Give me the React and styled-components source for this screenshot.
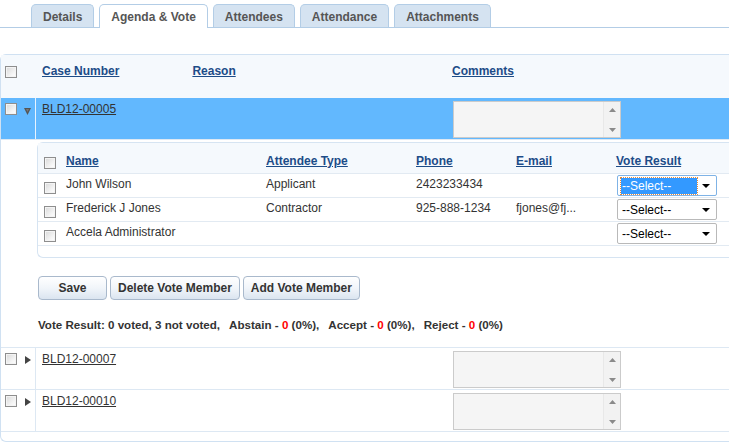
import React from 'react';
import styled, { createGlobalStyle } from 'styled-components';

const GlobalStyle = createGlobalStyle`
  body {
    margin: 0;
    font-family: "Liberation Sans", Arial, sans-serif;
    font-size: 12px;
    color: #333;
    background: #fff;
    overflow: hidden;
  }
`;

const Page = styled.div`
  width: 729px;
  height: 445px;
  overflow: hidden;
`;

const TabBar = styled.ul`
  display: flex;
  align-items: flex-end;
  gap: 5px;
  margin: 0;
  padding: 4px 0 0 31px;
  list-style: none;
  height: 23px;
  border-bottom: 1px solid #b3cde6;
`;

const Tab = styled.li`
  box-sizing: border-box;
  height: ${props => (props.active ? '24px' : '23px')};
  margin-bottom: ${props => (props.active ? '-1px' : '0')};
  padding: 1px 11px 0;
  line-height: 22px;
  font-weight: bold;
  color: #555;
  border: 1px solid #b3cde6;
  border-bottom: none;
  border-radius: 5px 5px 0 0;
  background: ${props => (props.active ? '#fff' : '#d5e3f1')};
`;

const Panel = styled.div`
  margin-top: 26px;
  width: 760px;
  border: 1px solid #d0e1f2;
  border-right: none;
  border-radius: 6px 0 0 6px;
  padding-bottom: 9px;
`;

const MainRow = styled.div`
  display: grid;
  grid-template-columns: 35px 409px 1fr;
  height: ${props => (props.header ? '42px' : '41px')};
  background: ${props => (props.selected ? '#62b8fe' : props.header ? '#f5f9fd' : '#fff')};
  border-bottom: 1px solid ${props => (props.header ? '#f5f9fd' : '#dde8f3')};
`;

const SelectCell = styled.div`
  display: flex;
  align-items: flex-start;
  gap: ${props => (props.selected ? 7 : 8)}px;
  padding: ${props => (props.header ? '11px' : '5px')} 0 0 4px;
  border-right: 1px solid ${props => (props.header ? 'transparent' : props.selected ? '#e7f3ff' : '#dde8f3')};
`;

const Cell = styled.div`
  padding: ${props => (props.header ? '9px' : '4px')} 0 0 ${props => props.pad || 6}px;
`;

const AreaCell = styled.div`
  padding-left: 8px;
`;

const HeadLink = styled.a`
  font-weight: bold;
  color: #1d4c88;
  text-decoration: underline;
  margin-left: ${props => props.offset || 0}px;
`;

const CaseLink = styled.a`
  color: #333;
  text-decoration: underline;
`;

const Box = styled.span`
  display: inline-block;
  box-sizing: border-box;
  width: 12px;
  height: 12px;
  flex: none;
  border: 1px solid #8e8e8e;
  background: linear-gradient(135deg, #d8d8d8, #f6f6f6 70%, #fff);
  box-shadow: inset 0 0 0 1px #f4f4f4;
`;

const Arrow = styled.svg`
  margin-top: ${props => props.top}px;
  flex: none;
`;

const FakeArea = styled.div`
  display: flex;
  width: 168px;
  height: 37px;
  margin-top: 3px;
  box-sizing: border-box;
  border: 1px solid #cbcbcb;
  background: #f5f5f5;
`;

const AreaText = styled.div`
  flex: 1;
`;

const ScrollBar = styled.div`
  width: 16px;
  display: flex;
  flex-direction: column;
  justify-content: space-between;
  align-items: center;
  padding: 6px 0 5px;
  border-left: 1px solid #e8e8e8;
  background: #f2f2f2;
`;

const Expanded = styled.div`
  padding: 2px 0 16px 36px;
  border-bottom: 1px solid #dde8f3;
`;

const Inner = styled.div`
  border: 1px solid #d6e4f2;
  border-right: none;
  border-radius: 6px 0 0 6px;
  padding-bottom: 11px;
`;

const VoteRow = styled.div`
  display: grid;
  grid-template-columns: 28px 200px 150px 100px 100px 1fr;
  height: ${props => (props.header ? '30px' : '23px')};
  background: ${props => (props.header ? '#f5f9fd' : '#fff')};
  border-bottom: 1px solid #e2eaf2;
`;

const VoteCell = styled.div`
  padding-top: ${props => (props.header ? '11px' : '3px')};
  white-space: nowrap;
`;

const BoxCell = styled.div`
  padding: ${props => (props.header ? '14px' : '8px')} 0 0 6px;
`;

const SelectBox = styled.div`
  box-sizing: border-box;
  width: 100px;
  height: 21px;
  margin: 1px 0 0 1px;
  display: flex;
  align-items: center;
  justify-content: space-between;
  padding: 0 6px 0 3px;
  border: 1px solid ${props => (props.focused ? '#7fb3e6' : '#b9b9b9')};
  border-radius: 2px;
  background: #fff;
  color: #000;
`;

const SelectText = styled.span`
  padding: 1px 1px;
  width: ${props => (props.focused ? '74px' : 'auto')};
  background: ${props => (props.focused ? '#3399ff' : 'transparent')};
  color: ${props => (props.focused ? '#fff' : '#000')};
  outline: ${props => (props.focused ? '1px dotted #e58a3a' : 'none')};
`;

const Buttons = styled.div`
  display: flex;
  gap: 3px;
  margin: 18px 0 0 1px;
`;

const Button = styled.button`
  box-sizing: border-box;
  height: 24px;
  min-width: 69px;
  padding: 0 7px;
  font-family: "Liberation Sans", Arial, sans-serif;
  font-size: 12px;
  font-weight: bold;
  color: #333;
  border: 1px solid #a9b9cc;
  border-radius: 4px;
  background: linear-gradient(#ffffff, #f1f5fa 50%, #dbe5f0);
`;

const Summary = styled.div`
  margin: 18px 0 0 1px;
  font-size: 11.6px;
  font-weight: bold;
  color: #333;
`;

const Gap = styled.span`
  display: inline-block;
  width: 9px;
`;

const Red = styled.span`
  color: #ff0000;
`;

function Check() {
  return <Box />;
}

function Scroll() {
  return (
    <ScrollBar>
      <svg width="7" height="4"><polygon points="0,4 3.5,0 7,4" fill="#8a8a8a" /></svg>
      <svg width="7" height="4"><polygon points="0,0 3.5,4 7,0" fill="#8a8a8a" /></svg>
    </ScrollBar>
  );
}

function CaseRow({ id, selected }) {
  return (
    <MainRow selected={selected}>
      <SelectCell selected={selected}>
        <Check />
        {selected ? (
          <Arrow width="7" height="7" top={5}>
            <polygon points="0,0 7,0 3.5,7" fill="#555" />
            <polygon points="2,1 5,1 3.5,4" fill="#777" />
          </Arrow>
        ) : (
          <Arrow width="6" height="8" top={3}>
            <polygon points="0,0 6,4 0,8" fill="#444" />
          </Arrow>
        )}
      </SelectCell>
      <Cell>
        <CaseLink>{id}</CaseLink>
      </Cell>
      <AreaCell>
        <FakeArea>
          <AreaText />
          <Scroll />
        </FakeArea>
      </AreaCell>
    </MainRow>
  );
}

function Select({ focused }) {
  return (
    <SelectBox focused={focused}>
      <SelectText focused={focused}>--Select--</SelectText>
      <svg width="8" height="4"><polygon points="0,0 8,0 4,4" fill="#000" /></svg>
    </SelectBox>
  );
}

const members = [
  { name: 'John Wilson', type: 'Applicant', phone: '2423233434', email: '', focused: true },
  { name: 'Frederick J Jones', type: 'Contractor', phone: '925-888-1234', email: 'fjones@fj...' },
  { name: 'Accela Administrator', type: '', phone: '', email: '' },
];

export default function App() {
  return (
    <Page>
      <GlobalStyle />
      <TabBar>
        <Tab>Details</Tab>
        <Tab active>Agenda &amp; Vote</Tab>
        <Tab>Attendees</Tab>
        <Tab>Attendance</Tab>
        <Tab>Attachments</Tab>
      </TabBar>

      <Panel>
        <MainRow header>
          <SelectCell header>
            <Check />
          </SelectCell>
          <Cell header>
            <HeadLink>Case Number</HeadLink>
            <HeadLink offset={73}>Reason</HeadLink>
          </Cell>
          <Cell header pad={7}>
            <HeadLink>Comments</HeadLink>
          </Cell>
        </MainRow>

        <CaseRow id="BLD12-00005" selected />

        <Expanded>
          <Inner>
            <VoteRow header>
              <BoxCell header><Check /></BoxCell>
              <VoteCell header><HeadLink>Name</HeadLink></VoteCell>
              <VoteCell header><HeadLink>Attendee Type</HeadLink></VoteCell>
              <VoteCell header><HeadLink>Phone</HeadLink></VoteCell>
              <VoteCell header><HeadLink>E-mail</HeadLink></VoteCell>
              <VoteCell header><HeadLink>Vote Result</HeadLink></VoteCell>
            </VoteRow>
            {members.map(m => (
              <VoteRow key={m.name}>
                <BoxCell><Check /></BoxCell>
                <VoteCell>{m.name}</VoteCell>
                <VoteCell>{m.type}</VoteCell>
                <VoteCell>{m.phone}</VoteCell>
                <VoteCell>{m.email}</VoteCell>
                <div><Select focused={m.focused} /></div>
              </VoteRow>
            ))}
          </Inner>

          <Buttons>
            <Button>Save</Button>
            <Button>Delete Vote Member</Button>
            <Button>Add Vote Member</Button>
          </Buttons>

          <Summary>
            Vote Result: 0 voted, 3 not voted,<Gap />Abstain - <Red>0</Red> (0%),
            <Gap />Accept - <Red>0</Red> (0%),<Gap />Reject - <Red>0</Red> (0%)
          </Summary>
        </Expanded>

        <CaseRow id="BLD12-00007" />
        <CaseRow id="BLD12-00010" />
      </Panel>
    </Page>
  );
}
